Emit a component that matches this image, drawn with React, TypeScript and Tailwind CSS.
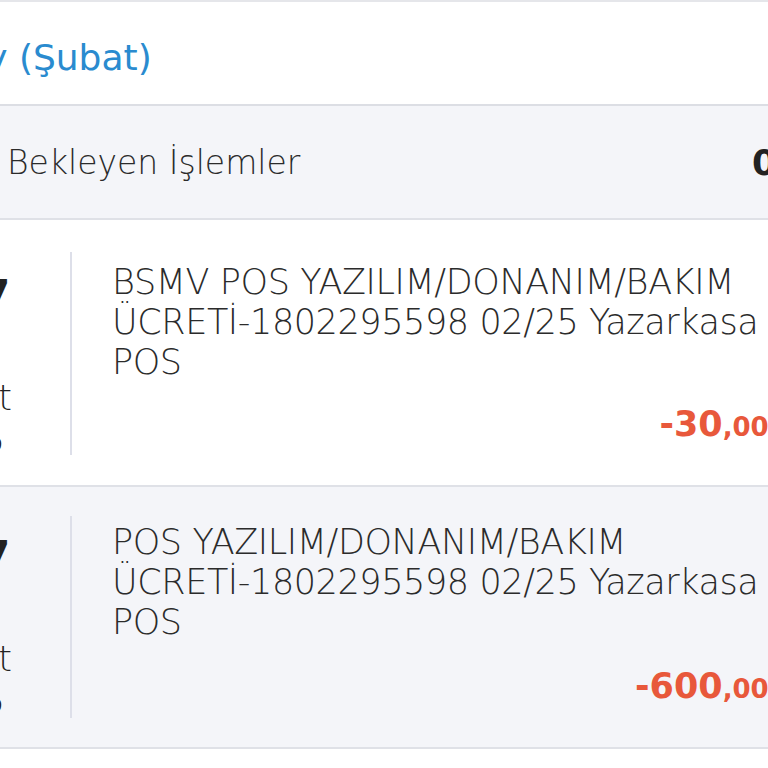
import React from "react"

interface Txn {
	day: string
	month: string
	year: string
	lines: string[]
	amount: string
	cents: string
	shaded: boolean
	rowH: string
	dateTop: string
	descTop: string
	bar: string
}

const txns: Txn[] = [
	{
		day: "17",
		month: "Şubat",
		year: "2025",
		lines: ["BSMV POS YAZILIM/DONANIM/BAKIM", "ÜCRETİ-1802295598 02/25 Yazarkasa", "POS"],
		amount: "-30",
		cents: ",00",
		shaded: false,
		rowH: "h-[267px]",
		dateTop: "pt-[51px]",
		descTop: "pt-[42px]",
		bar: "mt-[32px] mb-[30px]",
	},
	{
		day: "17",
		month: "Şubat",
		year: "2025",
		lines: ["POS YAZILIM/DONANIM/BAKIM", "ÜCRETİ-1802295598 02/25 Yazarkasa", "POS"],
		amount: "-600",
		cents: ",00",
		shaded: true,
		rowH: "h-[262px]",
		dateTop: "pt-[45px]",
		descTop: "pt-[35px]",
		bar: "mt-[29px] mb-[29px]",
	},
]

const TxnRow = ({ txn }: { txn: Txn }) => (
	<div
		className={`flex ${txn.rowH} border-b-2 border-[#dfe1e7] pr-[14px] ${txn.shaded ? "bg-[#f4f5f9]" : "bg-white"}`}
	>
		{/* date column, mostly scrolled off to the left */}
		<div className={`flex w-[122px] shrink-0 flex-col items-end ${txn.dateTop} text-[#222]`}>
			<span className="mr-[2px] text-[40px] font-bold leading-[48px]">{txn.day}</span>
			<span className="mt-[58px] text-[35px] font-light leading-[42px]">{txn.month}</span>
			<span className="mr-[7px] text-[35px] font-light leading-[42px]">{txn.year}</span>
		</div>
		<div className={`ml-[58px] ${txn.bar} w-[2px] shrink-0 bg-[#dddfe9]`} />
		<div className={`ml-[40px] flex flex-1 flex-col ${txn.descTop}`}>
			<div className="text-[35px] font-light leading-[40px] tracking-[-0.4px] text-[#2b2b2b]">
				{txn.lines.map((l, i) => (
					<div key={i} className="whitespace-nowrap">
						{l}
					</div>
				))}
			</div>
			<div className="mt-auto mb-[41px] flex h-[40px] items-baseline justify-end whitespace-nowrap font-semibold leading-[40px] text-[#e8583b]">
				<span className="text-[35px]">{txn.amount}</span>
				<span className="text-[26px]">{txn.cents}</span>
				<span className="ml-[8px] text-[26px]">TL</span>
			</div>
		</div>
	</div>
)

export default function App() {
	return (
		<div
			className="h-[768px] w-[768px] overflow-hidden bg-white"
			style={{ fontFamily: '"DejaVu Sans", "Noto Sans", sans-serif' }}
		>
			<div className="ml-[-110px] w-[935px]">
				<div className="h-[2px] bg-[#e5e6ea]" />
				<div className="flex h-[104px] items-center border-b-2 border-[#dcdee4] pl-[15px] pt-[9px]">
					<span className="whitespace-nowrap text-[36px] text-[#2a8bcf]">Bu Ay (Şubat)</span>
				</div>
				<div className="flex h-[114px] items-center border-b-2 border-[#dfe1e7] bg-[#f4f5f9] pr-[14px] pl-[117px] pt-[2px]">
					<span className="flex-1 text-[33px] font-light text-[#2b2b2b]">Bekleyen İşlemler</span>
					<span className="w-[59px] whitespace-nowrap text-[35px] font-bold text-[#222]">0,00 TL</span>
				</div>
				{txns.map((t, i) => (
					<TxnRow key={i} txn={t} />
				))}
			</div>
		</div>
	)
}
